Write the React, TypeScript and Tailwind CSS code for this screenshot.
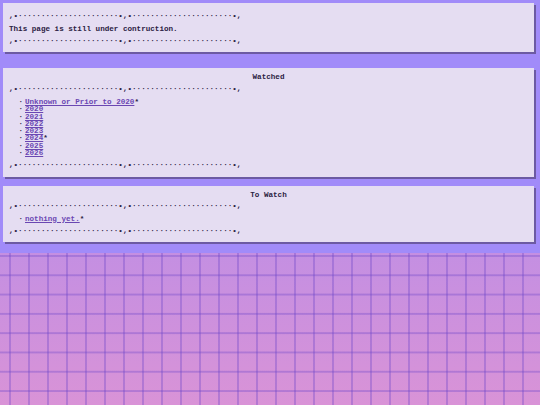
const rule = ',•' + '·'.repeat(22) + '•,•' + '·'.repeat(22) + '•,'

const watched = [
  { label: 'Unknown or Prior to 2020', star: true },
  { label: '2020' },
  { label: '2021' },
  { label: '2022' },
  { label: '2023' },
  { label: '2024', star: true },
  { label: '2025' },
  { label: '2026' },
]

function Rule({ className = '' }: { className?: string }) {
  return <div className={`h-[8px] leading-[8px] whitespace-pre ${className}`}>{rule}</div>
}

function Item({ label, star }: { label: string; star?: boolean }) {
  return (
    <li className="flex h-[7.3px] leading-[7.3px] whitespace-pre">
      <span className="ml-[9.5px] w-[6.5px]">·</span>
      <a href="#" className="text-[#6a47b2] underline underline-offset-[1px] decoration-[#6a47b2]">
        {label}
      </a>
      {star && <span>*</span>}
    </li>
  )
}

export default function App() {
  return (
    <div className="h-screen flex flex-col font-['Liberation_Mono',monospace] font-bold text-[7.6px] text-[#2b2142]">
      <div className="bg-[#a18bf9] pt-[3px] pb-[11px]">
        {/* intro */}
        <section className="w-[531px] ml-[3px] mb-[16px] bg-[#e5ddf2] shadow-[2px_2px_0_#6c5aa3] pl-[6px] pt-[9px] pb-[7px]">
          <Rule />
          <p className="mt-[5px] h-[8px] leading-[8px]">This page is still under contruction.</p>
          <Rule className="mt-[4px]" />
        </section>

        <section className="w-[531px] ml-[3px] mb-[9px] bg-[#e5ddf2] shadow-[2px_2px_0_#6c5aa3] pl-[6px] pt-[5px] pb-[8px]">
          <h2 className="h-[8px] leading-[8px] text-center pr-[6px]">Watched</h2>
          <Rule className="mt-[4px]" />
          <ul className="mt-[6px]">
            {watched.map((w) => (
              <Item key={w.label} label={w.label} star={w.star} />
            ))}
          </ul>
          <Rule className="mt-[3.6px]" />
        </section>

        <section className="w-[531px] ml-[3px] bg-[#e5ddf2] shadow-[2px_2px_0_#6c5aa3] pl-[6px] pt-[5px] pb-[7px]">
          <h2 className="h-[8px] leading-[8px] text-center pr-[6px]">To Watch</h2>
          <Rule className="mt-[3px]" />
          <ul className="mt-[5.6px]">
            <Item label="nothing yet." star />
          </ul>
          <Rule className="mt-[4.1px]" />
        </section>
      </div>

      {/* graph paper backdrop */}
      <div className="flex-1 [background-image:linear-gradient(to_right,rgba(110,70,200,0.35)_2px,transparent_2px),linear-gradient(to_bottom,rgba(110,70,200,0.35)_2px,transparent_2px),linear-gradient(to_bottom,#c48fe2,#d993d7)] [background-size:19px_19.3px,19px_19.3px,100%_100%] [background-position:9px_2px,9px_2px,0_0]" />
    </div>
  )
}
